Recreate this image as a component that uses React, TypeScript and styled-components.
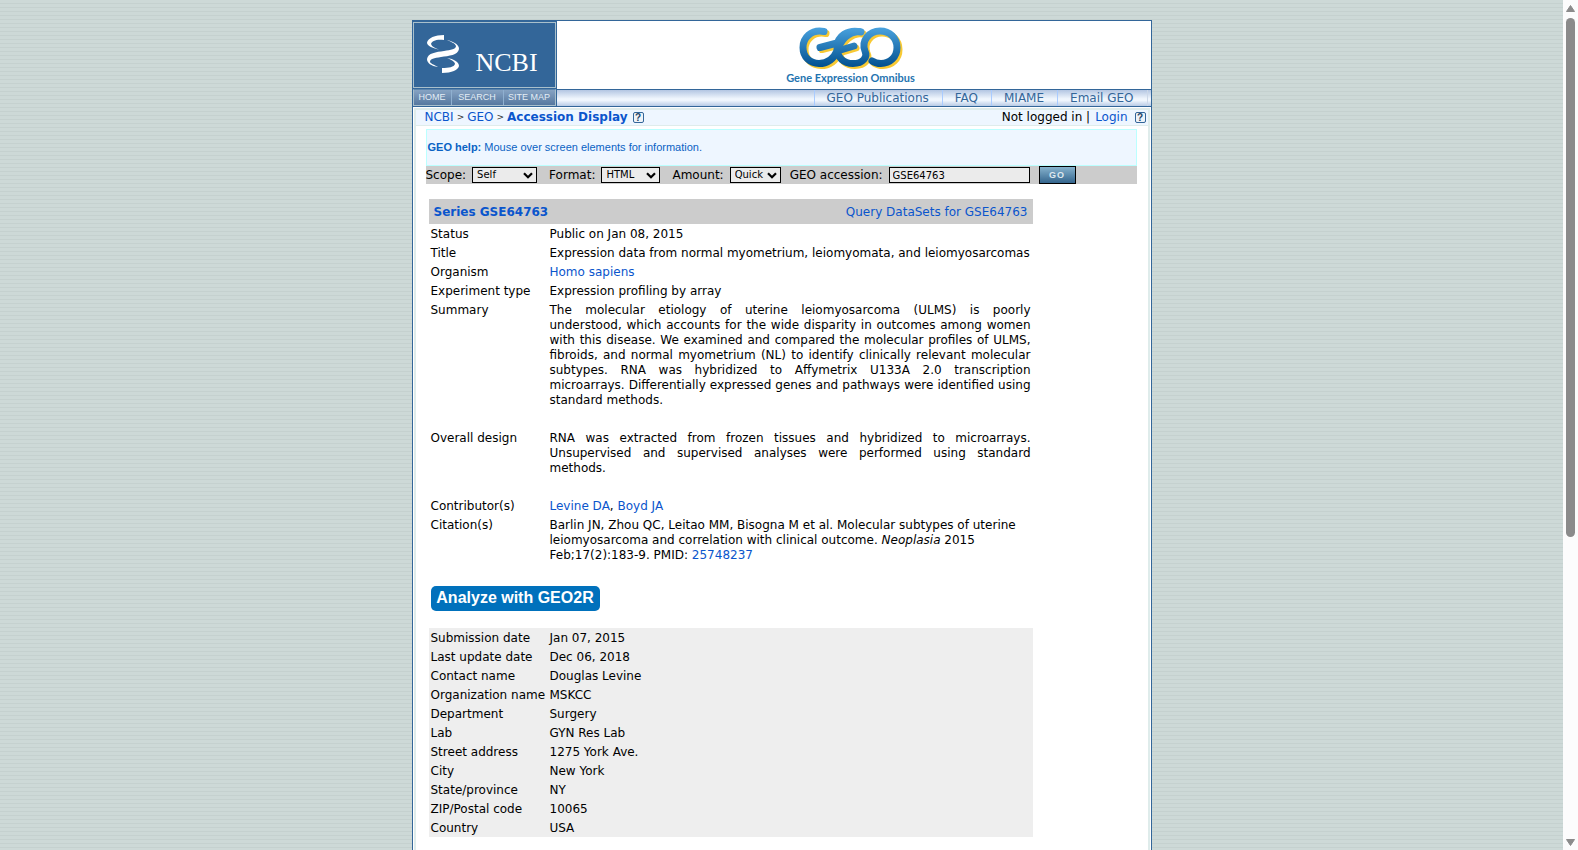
import React from "react";
import styled, { createGlobalStyle } from "styled-components";

const sans = '"DejaVu Sans", Verdana, sans-serif';
const arial = '"Liberation Sans", Arial, sans-serif';

const Global = createGlobalStyle`
  *, *::before, *::after { box-sizing: border-box; }
  body { margin: 0; font-family: ${sans}; font-size: 12px; line-height: 15px; color: #000; }
  a { color: #0a55cc; text-decoration: none; }
`;

const Viewport = styled.div`
  display: grid;
  grid-template-columns: minmax(0, 1fr) 15px;
  height: 100vh;
  overflow: hidden;
`;

const Backdrop = styled.div`
  display: flex;
  justify-content: center;
  align-items: stretch;
  padding-top: 20px;
  overflow: hidden;
  background: repeating-linear-gradient(to bottom, #cdd9d7 0 3px, #c5d1cf 3px 4px);
`;

const Sheet = styled.div`
  flex: 0 1 740px;
  display: flex;
  flex-direction: column;
  min-height: max-content;
  background: #fff;
  border: 1px solid #336699;
  border-bottom: 0;
`;

const Header = styled.header`
  display: grid;
  grid-template-columns: 144px minmax(0, 1fr);
  border-bottom: 1px solid #336699;
`;

const LogoColumn = styled.div`
  display: flex;
  flex-direction: column;
  background: #336699;
  border-right: 1px solid #336699;
`;

const NcbiLogo = styled.a`
  display: flex;
  align-items: flex-end;
  gap: 17px;
  height: 66px;
  margin-top: 1px;
  padding: 0 0 10px 13px;
  border: 1px solid #a9c0cc;
  color: #fff;
  font: 26px/28px "Liberation Serif", "Times New Roman", serif;
`;

const Helix = styled.svg`
  width: 32px;
  height: 38px;
  margin-bottom: 4px;
`;

const SiteLinks = styled.nav`
  display: grid;
  grid-template-columns: 38px 52px 1fr;
  height: 17px;
  margin-top: 1px;
  border: 1px solid #a9c0cc;
  border-top-color: #5c86ae;
`;

const SiteLink = styled.a`
  display: block;
  background: linear-gradient(#86a3c3, #56789f);
  border-right: 1px solid #8fb0d0;
  color: #e3edf5;
  font: 9px/15px ${arial};
  text-align: center;
  white-space: nowrap;
  &:last-child { border-right: 0; }
`;

const HeaderMain = styled.div`
  display: flex;
  flex-direction: column;
`;

const GeoBrand = styled.a`
  display: flex;
  flex-direction: column;
  align-items: center;
  height: 68px;
  padding: 5px 6px 0 0;
  color: #1f74b0;
  font: bold 11px/13px Lato, "Open Sans", sans-serif;
`;

const GeoMark = styled.svg`
  width: 106px;
  height: 45px;
`;

const TopNav = styled.nav`
  display: flex;
  justify-content: flex-end;
  height: 17px;
  padding-right: 3px;
  border-top: 1px solid #336699;
  background: linear-gradient(#b3c6e2, #f0f6fd 55%, #f0f6fd 65%, #b8cbe5);
`;

const TopLink = styled.a`
  padding: 1px 13px 0 12px;
  border-left: 1px solid #aaccff;
  color: #336699;
  &:last-child { border-right: 1px solid #ccd8e8; }
`;

const Inner = styled.main`
  flex: 1;
  margin: 1px 1px 0;
  border: 2px solid #dfeceb;
  border-bottom: 0;
`;

const Crumbs = styled.div`
  display: flex;
  justify-content: space-between;
  height: 16px;
  padding: 0 2px 0 9px;
  background: #eef6ff;
  border-bottom: 1px solid #dfeceb;
`;

const CrumbGroup = styled.div<{ $gap: number }>`
  display: flex;
  align-items: center;
  gap: ${(p) => p.$gap}px;
`;

const Arrow = styled.span`
  font-size: 9px;
  color: #333;
`;

const Help = styled.button`
  width: 11px;
  height: 11px;
  margin-left: 2px;
  padding: 0;
  border: 1px solid #336699;
  border-radius: 2px;
  background: #eef3f8;
  color: #224466;
  font: bold 10px/9px ${arial};
`;

const Content = styled.div`
  padding: 3px 11px 0 10px;
`;

const HelpBox = styled.p`
  margin: 0;
  padding: 10px 1px;
  height: 37px;
  border: 1px solid #bbffff;
  background: #eef6ff;
  color: #0a62c4;
  font: 11px/15px ${arial};
`;

const Toolbar = styled.form`
  display: flex;
  align-items: center;
  height: 18px;
  background: #cccccc;
`;

const Field = styled.label<{ $after: number }>`
  display: flex;
  align-items: center;
  gap: 6px;
  margin-right: ${(p) => p.$after}px;
  white-space: nowrap;
`;

const SelectWrap = styled.span<{ $w: number }>`
  display: grid;
  align-items: center;
  width: ${(p) => p.$w}px;
  & > * { grid-area: 1 / 1; }
`;

const Select = styled.select`
  appearance: none;
  width: 100%;
  height: 16px;
  padding: 0 0 0 4px;
  border: 1px solid #000;
  border-radius: 0;
  background: #ebebeb;
  color: #000;
  font: 10px/14px ${sans};
`;

const Chevron = styled.svg`
  justify-self: end;
  width: 10px;
  height: 7px;
  margin-right: 4px;
  pointer-events: none;
`;

const TextInput = styled.input`
  width: 141px;
  height: 16px;
  padding: 0 3px;
  border: 1px solid #000;
  background: #ebebeb;
  color: #000;
  font: 10px/14px ${sans};
`;

const Go = styled.button`
  width: 37px;
  height: 18px;
  padding: 0;
  border: 1px solid #000;
  background: linear-gradient(#86b2cd, #34658d);
  color: #dfe9ef;
  font: bold 9px/14px ${arial};
  letter-spacing: 1px;
`;

const Record = styled.article`
  width: 604px;
  max-width: 100%;
  margin: 15px 0 0 3px;
`;

const RecordHead = styled.div`
  display: flex;
  justify-content: space-between;
  align-items: center;
  height: 25px;
  padding: 1px 5px 0;
  background: #cccccc;
`;

const Table = styled.table<{ $shaded?: boolean }>`
  width: 100%;
  table-layout: fixed;
  border-collapse: collapse;
  background: ${(p) => (p.$shaded ? "#eeeeee" : "transparent")};
`;

const Label = styled.th`
  width: 119px;
  padding: 3px 2px 1px;
  font-weight: normal;
  text-align: left;
  vertical-align: top;
  white-space: nowrap;
`;

const Value = styled.td<{ $justify?: boolean; $gap?: boolean }>`
  padding: 3px 2px ${(p) => (p.$gap ? 20 : 1)}px;
  text-align: ${(p) => (p.$justify ? "justify" : "left")};
  vertical-align: top;
`;

const Analyze = styled.button`
  display: block;
  width: 169px;
  height: 25px;
  margin: 22px 0 17px 2px;
  padding: 0 0 2px;
  border: 0;
  border-radius: 5px;
  background: #0071bc;
  color: #fff;
  font: bold 16px/22px ${arial};
  white-space: nowrap;
`;

const ScrollTrack = styled.div`
  display: flex;
  flex-direction: column;
  align-items: center;
  padding: 5px 0 4px;
  background: #fcfcfc;
`;

const ScrollThumb = styled.div`
  width: 9px;
  height: 61vh;
  margin: 6px 0 auto;
  border-radius: 5px;
  background: #8b8b8b;
`;

const ScrollArrow = styled.svg`
  width: 9px;
  height: 7px;
`;

const details: { label: string; value: React.ReactNode; justify?: boolean; gap?: boolean }[] = [
  { label: "Status", value: "Public on Jan 08, 2015" },
  { label: "Title", value: "Expression data from normal myometrium, leiomyomata, and leiomyosarcomas" },
  { label: "Organism", value: <a href="#organism">Homo sapiens</a> },
  { label: "Experiment type", value: "Expression profiling by array" },
  {
    label: "Summary",
    value:
      "The molecular etiology of uterine leiomyosarcoma (ULMS) is poorly understood,\u00a0which accounts for the wide disparity in outcomes among women with this disease. We examined and compared the molecular profiles of ULMS, fibroids, and normal myometrium (NL) to identify clinically relevant molecular subtypes. RNA was hybridized to Affymetrix U133A 2.0 transcription microarrays. Differentially expressed genes and pathways were identified using standard\u00a0methods.",
    justify: true,
    gap: true,
  },
  {
    label: "Overall design",
    value:
      "RNA was extracted from frozen tissues and hybridized to microarrays. Unsupervised and supervised analyses were performed using standard methods.",
    justify: true,
    gap: true,
  },
  {
    label: "Contributor(s)",
    value: (
      <>
        <a href="#levine">Levine DA</a>, <a href="#boyd">Boyd JA</a>
      </>
    ),
  },
  {
    label: "Citation(s)",
    value: (
      <>
        Barlin JN, Zhou QC, Leitao MM, Bisogna M et al. Molecular subtypes of uterine leiomyosarcoma and
        correlation with clinical outcome. <i>Neoplasia</i> 2015 Feb;17(2):183-9. PMID:{" "}
        <a href="#pmid">25748237</a>
      </>
    ),
  },
];

const contact = [
  ["Submission date", "Jan 07, 2015"],
  ["Last update date", "Dec 06, 2018"],
  ["Contact name", "Douglas Levine"],
  ["Organization name", "MSKCC"],
  ["Department", "Surgery"],
  ["Lab", "GYN Res Lab"],
  ["Street address", "1275 York Ave."],
  ["City", "New York"],
  ["State/province", "NY"],
  ["ZIP/Postal code", "10065"],
  ["Country", "USA"],
];

function Dropdown({ label, value, width, after }: { label: string; value: string; width: number; after: number }) {
  return (
    <Field $after={after}>
      {label}
      <SelectWrap $w={width}>
        <Select defaultValue={value}>
          <option>{value}</option>
        </Select>
        <Chevron viewBox="0 0 10 7">
          <path d="M1 1.2l4 4 4-4" fill="none" stroke="#000" strokeWidth="2.2" />
        </Chevron>
      </SelectWrap>
    </Field>
  );
}

const geoStrokes = (
  <>
    <path d="M25 4.500C12 2 4 11 4 20.500C4 30 11 36.500 20 36.500C30 36.500 35 31 38 24C42 13 48 5 60 4.500" />
    <path d="M21 20.500L40 15.500" />
    <path d="M62 5C49 2 38 9 38 20.500C38 31 45 36.500 54 36.500C64 36.500 69 30 66 24C62 14 70 4 81 4C91 4 98 11 98 20.500C98 30 91 36.500 82 36.500C78 36.500 76 36 73 34" />
    <path d="M40 23.500L55 19" />
  </>
);

export default function App() {
  return (
    <>
      <Global />
      <Viewport>
        <Backdrop>
          <Sheet>
            <Header>
              <LogoColumn>
                <NcbiLogo href="#ncbi">
                  <Helix viewBox="0 0 32 38" fill="#fff" aria-hidden="true">
                    <path d="M17 0V5C9 4 5 6 4 9C5 12 8 13 12 14.500C5 13 0 11 0 7.500C1 3 8 0 17 0Z" />
                    <path d="M20 5C28 7 32 10 32 14C31 20 22 21 14 22C7 23 3 24 3 27C4 29 8 30 11 32C4 31 0 28 0 24C1 18 9 17 17 16C24 15 29 14 29 11C28 8 24 7 20 5Z" />
                    <path d="M20 23C27 24 32 27 32 31C31 35 25 38 15 38V33C22 33 27 32 28 29C28 27 25 25 20 23Z" />
                  </Helix>
                  NCBI
                </NcbiLogo>
                <SiteLinks>
                  <SiteLink href="#home">HOME</SiteLink>
                  <SiteLink href="#search">SEARCH</SiteLink>
                  <SiteLink href="#map">SITE MAP</SiteLink>
                </SiteLinks>
              </LogoColumn>
              <HeaderMain>
                <GeoBrand href="#geo">
                  <GeoMark viewBox="0 0 106 45" fill="none" aria-label="GEO">
                    <defs>
                      <linearGradient id="blue" gradientUnits="userSpaceOnUse" x1="0" y1="0" x2="0" y2="40">
                        <stop offset="0" stopColor="#4aa3df" />
                        <stop offset="1" stopColor="#02508f" />
                      </linearGradient>
                    </defs>
                    <g stroke="#f8c933" strokeWidth="7" strokeLinecap="round" transform="translate(3 3)">
                      {geoStrokes}
                    </g>
                    <g stroke="url(#blue)" strokeWidth="7" strokeLinecap="round" transform="translate(1 1)">
                      {geoStrokes}
                    </g>
                  </GeoMark>
                  Gene Expression Omnibus
                </GeoBrand>
                <TopNav>
                  <TopLink href="#pubs">GEO Publications</TopLink>
                  <TopLink href="#faq">FAQ</TopLink>
                  <TopLink href="#miame">MIAME</TopLink>
                  <TopLink href="#email">Email GEO</TopLink>
                </TopNav>
              </HeaderMain>
            </Header>
            <Inner>
              <Crumbs>
                <CrumbGroup $gap={3}>
                  <a href="#ncbi">NCBI</a>
                  <Arrow>&gt;</Arrow>
                  <a href="#geo">GEO</a>
                  <Arrow>&gt;</Arrow>
                  <a href="#accession">
                    <b>Accession Display</b>
                  </a>
                  <Help>?</Help>
                </CrumbGroup>
                <CrumbGroup $gap={5}>
                  <span>Not logged in |</span>
                  <a href="#login">Login</a>
                  <Help>?</Help>
                </CrumbGroup>
              </Crumbs>
              <Content>
                <HelpBox>
                  <b>GEO help:</b> Mouse over screen elements for information.
                </HelpBox>
                <Toolbar onSubmit={(e) => e.preventDefault()}>
                  <Dropdown label="Scope:" value="Self" width={65} after={12} />
                  <Dropdown label="Format:" value="HTML" width={59} after={12} />
                  <Dropdown label="Amount:" value="Quick" width={51} after={9} />
                  <Field $after={9}>
                    GEO accession:
                    <TextInput defaultValue="GSE64763" />
                  </Field>
                  <Go>GO</Go>
                </Toolbar>
                <Record>
                  <RecordHead>
                    <a href="#series">
                      <b>Series GSE64763</b>
                    </a>
                    <a href="#query">Query DataSets for GSE64763</a>
                  </RecordHead>
                  <Table>
                    <tbody>
                      {details.map((d) => (
                        <tr key={d.label}>
                          <Label scope="row">{d.label}</Label>
                          <Value $justify={d.justify} $gap={d.gap}>
                            {d.value}
                          </Value>
                        </tr>
                      ))}
                    </tbody>
                  </Table>
                  <Analyze>Analyze with GEO2R</Analyze>
                  <Table $shaded>
                    <tbody>
                      {contact.map(([label, value]) => (
                        <tr key={label}>
                          <Label scope="row">{label}</Label>
                          <Value>{value}</Value>
                        </tr>
                      ))}
                    </tbody>
                  </Table>
                </Record>
              </Content>
            </Inner>
          </Sheet>
        </Backdrop>
        <ScrollTrack aria-hidden="true">
          <ScrollArrow viewBox="0 0 9 7">
            <path d="M4.500 0.500L8.500 6.500H0.500Z" fill="#8b8b8b" stroke="#8b8b8b" strokeLinejoin="round" />
          </ScrollArrow>
          <ScrollThumb />
          <ScrollArrow viewBox="0 0 9 7">
            <path d="M4.500 6.500L8.500 0.500H0.500Z" fill="#8b8b8b" stroke="#8b8b8b" strokeLinejoin="round" />
          </ScrollArrow>
        </ScrollTrack>
      </Viewport>
    </>
  );
}
